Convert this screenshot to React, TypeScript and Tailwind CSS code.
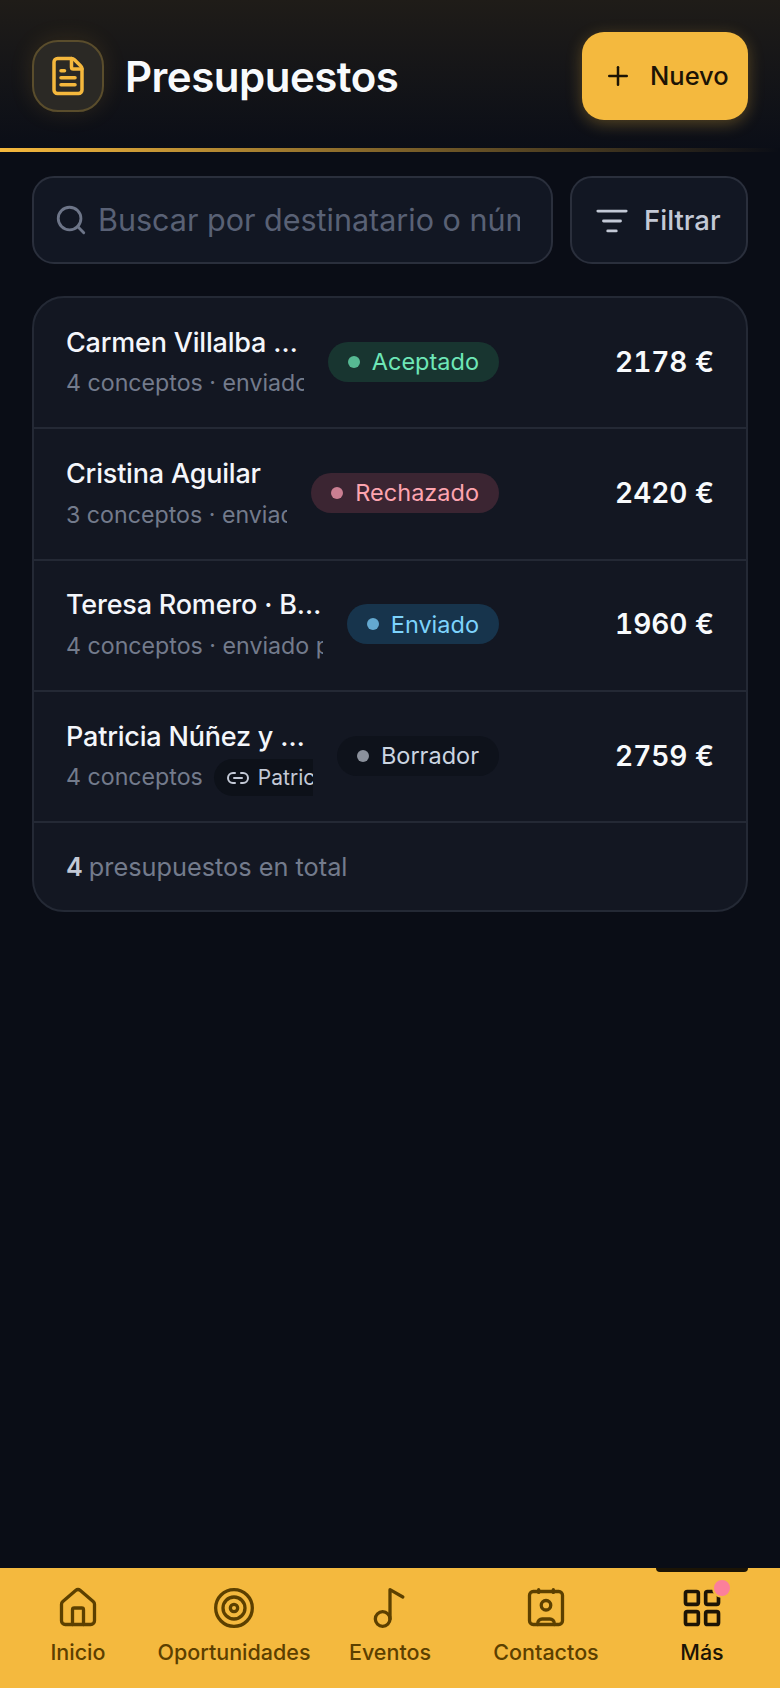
import React from "react";
import { FileText, House, Link2, ListFilter, Music2, Plus, Search, Target, LayoutGrid } from "lucide-react";

interface Quote {
  name: string;
  meta: string;
  chip?: string;
  status: string;
  pill: string;
  dot: string;
  amount: string;
}

const quotes: Quote[] = [
  { name: "Carmen Villalba · Boda en finca", meta: "4 conceptos · enviado por correo", status: "Aceptado", pill: "bg-[#183530] text-[#6ee7b7]", dot: "bg-[#57b993]", amount: "2178 €" },
  { name: "Cristina Aguilar", meta: "3 conceptos · enviado por correo", status: "Rechazado", pill: "bg-[#3b2532] text-[#fda4af]", dot: "bg-[#ca7f92]", amount: "2420 €" },
  { name: "Teresa Romero · Bautizo familiar", meta: "4 conceptos · enviado por correo", status: "Enviado", pill: "bg-[#17344c] text-[#7dd3fc]", dot: "bg-[#64a9d0]", amount: "1960 €" },
  { name: "Patricia Núñez y Daniel Ortega", meta: "4 conceptos", chip: "Patricia Núñez", status: "Borrador", pill: "bg-[#0e121b] text-[#cbd5e1]", dot: "bg-[#8b919c]", amount: "2759 €" },
];

// the calendar-style contact card, lucide's one has longer tabs
const ContactCard = ({ size, strokeWidth }: { size: number; strokeWidth: number }) => (
  <svg width={size} height={size} viewBox="0 0 24 24" fill="none" stroke="currentColor" strokeWidth={strokeWidth} strokeLinecap="round" strokeLinejoin="round">
    <rect x="3" y="3" width="18" height="18" rx="2" />
    <path d="M8 2v1.5" />
    <path d="M16 2v1.5" />
    <circle cx="12" cy="10.5" r="2.6" />
    <path d="M7.5 21v-.6a2.4 2.4 0 0 1 2.4-2.4h4.2a2.4 2.4 0 0 1 2.4 2.4v.6" />
  </svg>
);

const navItems = [
  { label: "Inicio", icon: House },
  { label: "Oportunidades", icon: Target },
  { label: "Eventos", icon: Music2 },
  { label: "Contactos", icon: ContactCard },
];

const QuoteRow = ({ quote }: { quote: Quote }) => (
  <div className="flex items-center h-[131.33px] pl-[32px] pr-[32px] border-b-2 border-[#242935]">
    <div className="flex-1 min-w-0">
      <div className="text-[27px] leading-[40px] tracking-[-0.2px] font-medium text-[#f4f6fb] truncate">{quote.name}</div>
      <div className="flex items-center gap-[11px] mt-[2px] h-[38px] overflow-hidden whitespace-nowrap text-[23.2px] text-[#737b8c]">
        <span className={quote.chip ? "shrink-0" : ""}>{quote.meta}</span>
        {quote.chip && (
          <span className="flex items-center gap-2 shrink-0 h-[37px] pl-3 pr-3 rounded-full bg-[#0d1119] text-[21px] text-[#c3c9d6]">
            <Link2 size={24} strokeWidth={2} />
            {quote.chip}
          </span>
        )}
      </div>
    </div>
    <div className={`ml-6 shrink-0 flex items-center gap-3 h-[40px] px-5 rounded-full text-[23.5px] -mt-[2px] ${quote.pill}`}>
      <span className={`w-3 h-3 rounded-full ${quote.dot}`} />
      {quote.status}
    </div>
    <div className="w-[215px] shrink-0 text-right text-[28px] font-semibold tabular-nums text-[#f8fafc] -mt-[2px]">{quote.amount}</div>
  </div>
);

export default function App() {
  return (
    <div className="flex flex-col h-[1688px] bg-[#0a0d16] overflow-hidden font-['Inter','Liberation_Sans',sans-serif]">
      <header className="flex items-center justify-between h-[148px] pl-8 pr-8 pt-[4px] bg-gradient-to-b from-[#1f1c18] to-[#0b0e17]">
        <div className="flex items-center gap-[21px]">
          <div className="flex items-center justify-center w-[72px] h-[72px] rounded-[26px] border-2 border-[#5a4d2c] bg-[#2b2925] text-[#f5b83d] shadow-[0_0_24px_rgba(245,184,61,0.12)]">
            <FileText size={42} strokeWidth={2} />
          </div>
          <h1 className="text-[42px] font-semibold tracking-[-0.5px] text-[#f8fafc]">Presupuestos</h1>
        </div>
        <button className="flex items-center gap-[17px] w-[166px] h-[88px] pl-[21px] rounded-[22px] bg-[#f4b93e] text-[#1c1405] text-[25.5px] font-medium shadow-[0_4px_16px_rgba(245,184,61,0.3)]">
          <Plus size={30} strokeWidth={2} />
          Nuevo
        </button>
      </header>
      <div className="h-1 bg-gradient-to-r from-[#f5b83d] to-transparent" />

      <main className="flex-1 px-8 pt-6">
        <div className="flex gap-[17px]">
          <div className="flex flex-1 min-w-0 items-center gap-[10px] h-[88px] pl-[20px] pr-[31px] rounded-[22px] border-2 border-[#2a2f3c] bg-[#121723] text-[#6d7588]">
            <Search size={34} strokeWidth={2} className="shrink-0" />
            <input
              readOnly
              placeholder="Buscar por destinatario o número"
              className="flex-1 min-w-0 bg-transparent text-[30.5px] outline-none placeholder:text-[#596175]"
            />
          </div>
          <button className="flex items-center gap-[15px] w-[178px] h-[88px] pl-[23px] pt-px rounded-[22px] border-2 border-[#2a2f3c] bg-[#121723] text-[#c3c9d6] text-[27.5px] font-medium">
            <ListFilter size={34} strokeWidth={2} />
            Filtrar
          </button>
        </div>

        <section className="mt-[32px] rounded-[32px] border-2 border-[#242935] bg-[#131722] overflow-hidden">
          {quotes.map((quote) => (
            <QuoteRow key={quote.name} quote={quote} />
          ))}
          <div className="flex items-center h-[87px] pl-[32px] text-[25.3px] text-[#737b8c]">
            <span className="font-semibold text-[#c3c9d6] mr-[6px]">4</span>
            presupuestos en total
          </div>
        </section>
      </main>

      <nav className="flex h-[120px] bg-[#f4b93e]">
        {navItems.map(({ label, icon: Icon }) => (
          <div key={label} className="flex-1 flex flex-col items-center pt-[18px] text-[#5c4000]">
            <Icon size={44} strokeWidth={1.8} />
            <span className="mt-[6px] text-[21.5px] font-medium whitespace-nowrap">{label}</span>
          </div>
        ))}
        <div className="relative flex-1 flex flex-col items-center pt-[18px] text-[#1c1405]">
          <div className="absolute top-0 left-1/2 -translate-x-1/2 w-[92px] h-1 rounded-b-md bg-[#1c1405]" />
          <div className="relative">
            <LayoutGrid size={44} strokeWidth={2} />
            <span className="absolute -top-[8px] -right-[8px] w-[20px] h-[20px] rounded-full border-2 border-[#f4b93e] bg-[#fb7f9b]" />
          </div>
          <span className="mt-[6px] text-[21.5px] font-medium">Más</span>
        </div>
      </nav>
    </div>
  );
}
